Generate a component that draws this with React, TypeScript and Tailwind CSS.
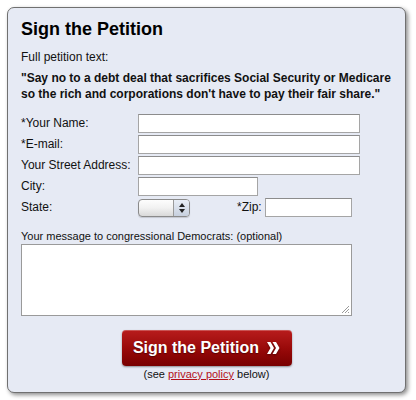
const font = { fontFamily: '"Liberation Sans", Arial, Helvetica, sans-serif' };

const rows = [
  { label: "*Your Name:", width: "w-[222px]" },
  { label: "*E-mail:", width: "w-[222px]" },
  { label: "Your Street Address:", width: "w-[222px]" },
  { label: "City:", width: "w-[120px]" },
];

function StateSelect() {
  return (
    <div className="flex h-[18px] w-[52px] overflow-hidden rounded-[4px] border border-[#8a8a8a] bg-gradient-to-b from-[#fdfdfd] via-[#f1f1f1] to-[#d9d9d9] shadow-[0_1px_1px_rgba(0,0,0,0.15)]">
      <div className="flex-1" />
      <div className="flex w-[16px] flex-col items-center justify-center gap-[2px] border-l border-[#9a9a9a] bg-gradient-to-b from-[#e9eef6] to-[#c7d0de]">
        <svg width="6" height="4" viewBox="0 0 6 4">
          <path d="M3 0 L6 4 L0 4 Z" fill="#222" />
        </svg>
        <svg width="6" height="4" viewBox="0 0 6 4">
          <path d="M0 0 L6 0 L3 4 Z" fill="#222" />
        </svg>
      </div>
    </div>
  );
}

export default function App() {
  return (
    <div className="min-h-[400px] w-[416px] bg-white pl-[7px] pt-[7px]" style={font}>
      <div className="flex w-[399px] flex-col rounded-[7px] border border-[#707070] bg-[#e6eaf4] pb-[11px] pl-[13px] pt-[10px] text-black shadow-[2px_2px_4px_rgba(0,0,0,0.45)]">
        <h2 className="text-[18px] font-bold leading-[22px]">Sign the Petition</h2>
        <p className="mt-[9px] text-[12px] leading-[16px] text-[#111]">Full petition text:</p>
        <p className="mt-[5px] pr-[8px] text-[12px] font-bold leading-[16px] text-[#111]">
          "Say no to a debt deal that sacrifices Social Security or Medicare so the rich and corporations don't have to pay their fair share."
        </p>

        <div className="mt-[12px] flex flex-col gap-[2px]">
          {rows.map((row) => (
            <div key={row.label} className="flex items-center">
              <span className="w-[117px] text-[12px] leading-[19px] text-[#111]">{row.label}</span>
              <div className={`${row.width} h-[19px] border border-[#a5a5a5] border-t-[#8c8c8c] bg-white`} />
            </div>
          ))}
          <div className="flex items-center">
            <span className="w-[117px] text-[12px] leading-[19px] text-[#111]">State:</span>
            <StateSelect />
            <span className="ml-[47px] w-[28px] text-[12px] leading-[19px] text-[#111]">*Zip:</span>
            <div className="h-[19px] w-[87px] border border-[#a5a5a5] border-t-[#8c8c8c] bg-white" />
          </div>
        </div>

        <p className="mt-[12px] text-[11px] leading-[14px] text-[#111]">
          Your message to congressional Democrats: (optional)
        </p>
        <div className="relative mt-[1px] h-[72px] w-[331px] border border-[#9a9a9a] bg-white">
          <svg className="absolute bottom-[1px] right-[1px]" width="10" height="10" viewBox="0 0 10 10">
            <path d="M9 2 L2 9 M9 5 L5 9 M9 8 L8 9" stroke="#9a9a9a" strokeWidth="1" />
          </svg>
        </div>

        <div className="mt-[14px] flex flex-col items-center pr-[13px]">
          <button
            type="button"
            className="flex h-[36px] w-[170px] items-center justify-center gap-[7px] rounded-[4px] bg-gradient-to-b from-[#b81c1c] via-[#9a0a0a] to-[#780000] text-[16px] font-bold text-white shadow-[0_1px_2px_rgba(0,0,0,0.4),inset_0_1px_0_rgba(255,255,255,0.25)]"
            style={{ textShadow: "0 1px 1px rgba(0,0,0,0.4)" }}
          >
            Sign the Petition
            <svg width="14" height="12" viewBox="0 0 14 12" className="drop-shadow-[0_1px_1px_rgba(0,0,0,0.4)]">
              <path d="M1 0 H4.5 L8 6 L4.5 12 H1 L4.5 6 Z" fill="white" />
              <path d="M6.5 0 H10 L13.5 6 L10 12 H6.5 L10 6 Z" fill="white" />
            </svg>
          </button>
          <p className="mt-[1px] text-[11px] leading-[14px] text-[#111]">
            (see <span className="text-[#b3101a] underline">privacy policy</span> below)
          </p>
        </div>
      </div>
    </div>
  );
}
